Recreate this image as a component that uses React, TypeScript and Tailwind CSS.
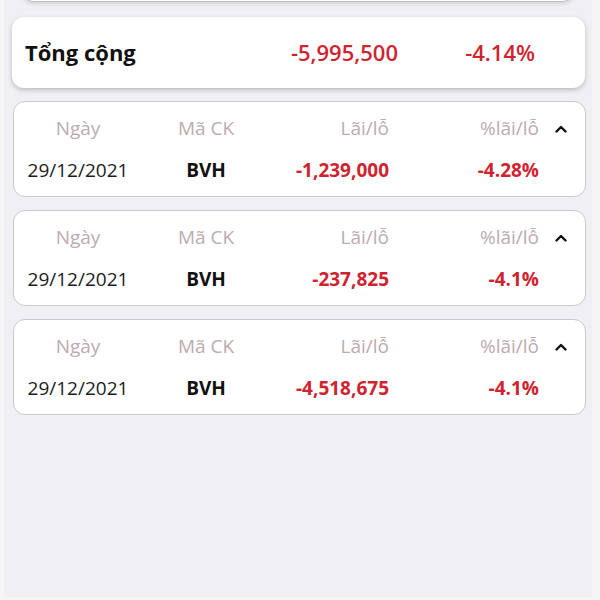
const rows = [
  { date: "29/12/2021", code: "BVH", pnl: "-1,239,000", pct: "-4.28%" },
  { date: "29/12/2021", code: "BVH", pnl: "-237,825", pct: "-4.1%" },
  { date: "29/12/2021", code: "BVH", pnl: "-4,518,675", pct: "-4.1%" },
]

function ChevronUp() {
  return (
    <svg width="14" height="9" viewBox="0 0 14 9" fill="none">
      <polyline points="2.5,7.5 7,3 11.5,7.5" stroke="#111" strokeWidth="2.4" strokeLinecap="round" strokeLinejoin="round" />
    </svg>
  )
}

function TradeCard({ date, code, pnl, pct }: { date: string; code: string; pnl: string; pct: string }) {
  return (
    <div className="ml-[9px] mr-[6px] flex h-[96px] flex-col justify-center gap-[18px] rounded-[12px] border border-[#c9c9cc] bg-white">
      <div className="flex items-center text-[19px] leading-[24px] text-[#bcabb0]">
        <div className="w-[128px] text-center">Ngày</div>
        <div className="w-[128px] text-center">Mã CK</div>
        <div className="w-[119px] text-right">Lãi/lỗ</div>
        <div className="w-[150px] text-right">%lãi/lỗ</div>
        <div className="flex flex-1 justify-center pr-[2px]">
          <ChevronUp />
        </div>
      </div>
      <div className="flex items-center text-[19px] leading-[24px]">
        <div className="w-[128px] text-center text-[#1c1c1c]">{date}</div>
        <div className="w-[128px] text-center font-bold text-[#111]">{code}</div>
        <div className="w-[119px] text-right font-bold text-[#cf2430]">{pnl}</div>
        <div className="w-[150px] text-right font-bold text-[#cf2430]">{pct}</div>
        <div className="flex-1" />
      </div>
    </div>
  )
}

export default function App() {
  return (
    <div
      className="h-[600px] w-[600px] overflow-hidden border-b-[3px] border-l-[4px] border-r-[8px] border-[#f5f5f8] bg-[#efeff4]"
      style={{ fontFamily: '"Open Sans", "Noto Sans", sans-serif' }}
    >
      <div className="mx-[18px] -mt-[38px] h-[40px] rounded-b-[12px] border-b border-[#bdbdc2] bg-white shadow-[0_2px_4px_rgba(0,0,0,0.12)]" />

      <div className="mt-[15px] ml-[8px] mr-[7px] flex h-[71px] items-center rounded-[12px] bg-white shadow-[0_2px_5px_rgba(0,0,0,0.22)]">
        <div className="w-[263px] pl-[13px] text-[22px] font-bold text-[#111]">Tổng cộng</div>
        <div className="w-[123px] text-right text-[22px] font-semibold text-[#cf2430]">-5,995,500</div>
        <div className="w-[137px] text-right text-[22px] font-semibold text-[#cf2430]">-4.14%</div>
      </div>

      <div className="mt-[13px] flex flex-col gap-[13px]">
        {rows.map((r, i) => (
          <TradeCard key={i} {...r} />
        ))}
      </div>
    </div>
  )
}
